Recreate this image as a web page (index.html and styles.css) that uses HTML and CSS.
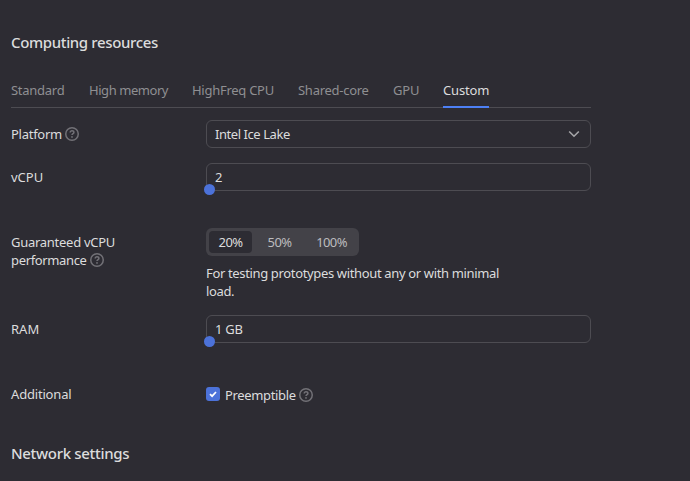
FILE: index.html
```html
<!DOCTYPE html>
<html lang="en">
<head>
<meta charset="utf-8">
<title>Computing resources</title>
<link rel="stylesheet" href="styles.css">
</head>
<body>
<svg width="0" height="0" class="defs">
  <symbol id="help" viewBox="0 0 14 14">
    <circle cx="7" cy="7" r="6.25" fill="none" stroke="currentColor" stroke-width="1.5"/>
    <path d="M5.2 5.6C5.2 4.4 6 3.8 7 3.8s1.9.6 1.9 1.6C8.900 6.600 7 6.700 7 8.100" fill="none" stroke="currentColor" stroke-width="1.5"/>
    <circle cx="7" cy="9.900" r=".9" fill="currentColor"/>
  </symbol>
</svg>
<main class="page">
  <h2 class="title">Computing resources</h2>
  <nav class="tabs">
    <span class="tab">Standard</span>
    <span class="tab tighter">High memory</span>
    <span class="tab">HighFreq CPU</span>
    <span class="tab">Shared-core</span>
    <span class="tab loose">GPU</span>
    <span class="tab loose active">Custom</span>
  </nav>
  <div class="row row-platform">
    <div class="label">Platform <svg class="help"><use href="#help"/></svg></div>
    <div class="field select"><span class="tighter">Intel Ice Lake</span>
      <svg class="chevron" viewBox="0 0 12 8"><path d="M1.200 1.500 6 6.200 10.800 1.500" fill="none" stroke="currentColor" stroke-width="1.600"/></svg>
    </div>
  </div>
  <div class="row row-cpu">
    <div class="label natural">vCPU</div>
    <div class="field">2<i class="knob"></i></div>
  </div>
  <div class="row row-perf">
    <div class="label multi">Guaranteed vCPU<br><span class="tight">performance</span><svg class="help"><use href="#help"/></svg></div>
    <div>
      <div class="segments">
        <span class="segment on">20%</span><span class="segment">50%</span><span class="segment">100%</span>
      </div>
      <p class="hint tight">For testing prototypes without any or with minimal<br>load.</p>
    </div>
  </div>
  <div class="row row-ram">
    <div class="label natural">RAM</div>
    <div class="field">1 GB<i class="knob"></i></div>
  </div>
  <div class="row row-extra">
    <div class="label loose">Additional</div>
    <div class="check">
      <span class="box"><svg viewBox="0 0 14 14"><path d="M4 7.200 6.100 9.200 10 5" fill="none" stroke="#fff" stroke-width="1.700"/></svg></span>
      <span class="t-pre tight">Preemptible</span> <svg class="help"><use href="#help"/></svg>
    </div>
  </div>
  <h2 class="title network">Network settings</h2>
</main>
</body>
</html>
```
FILE: styles.css
```css
* { box-sizing: border-box; }
body {
  margin: 0;
  height: 481px;
  overflow: hidden;
  background: #2d2c33;
  color: #dcdcdd;
  font: 13px/18px "Noto Sans", sans-serif;
  letter-spacing: -0.27px;
  white-space: nowrap;
}
.defs { position: absolute; }
.page { width: 580px; margin-left: 11px; padding-top: 32px; }
.title { margin: 0; font-size: 15px; line-height: 20px; font-weight: 500; letter-spacing: -0.37px; }
.tabs {
  display: grid;
  grid-template-columns: 54px 79px 82px 71px 26px 46px;
  column-gap: 24px;
  height: 36px;
  margin-top: 20px;
  border-bottom: 1px solid #4d4c52;
}
.tab { height: 36px; padding-top: 9px; color: #8f8f92; }
.tab.active { color: #dcdcdd; border-bottom: 2px solid #4d80f5; }
.tight { letter-spacing: -0.35px; }
.tighter { letter-spacing: -0.44px; }
.loose { letter-spacing: -0.18px; }
.natural { letter-spacing: 0; }
.row { display: grid; grid-template-columns: 195px 385px; align-items: start; }
.row-platform { margin-top: 12px; }
.row-cpu { margin-top: 15px; }
.row-perf { margin-top: 37px; }
.row-ram { margin-top: 15px; }
.row-extra { margin-top: 37px; }
.label { display: flex; align-items: center; gap: 3px; height: 28px; }
.label.multi { display: block; height: auto; padding-top: 5px; }
.help { width: 14px; height: 14px; color: #727177; flex: none; }
.multi .help { margin-left: 3px; vertical-align: -2px; }
.field {
  position: relative;
  display: flex;
  align-items: center;
  height: 28px;
  padding: 0 8px;
  border: 1px solid #4d4c52;
  border-radius: 6px;
}
.select { justify-content: space-between; }
.chevron { width: 12px; height: 8px; margin-right: 2px; color: #a6a6a9; }
.knob {
  position: absolute;
  left: -3px;
  bottom: -5px;
  width: 11px;
  height: 11px;
  border-radius: 50%;
  background: #4c72d9;
}
.segments { display: inline-flex; height: 28px; padding: 3px; border-radius: 6px; background: #434248; vertical-align: top; letter-spacing: -0.6px; }
.segment { padding: 2px 0; width: 53px; text-align: center; color: #bcbcbf; }
.segment.on { width: 43px; border-radius: 4px; background: #2d2c33; color: #dcdcdd; }
.segment:nth-child(2) { width: 55px; }
.segment:nth-child(3) { width: 49px; }
.hint { margin: 8px 0 0; }
.check { display: flex; align-items: center; height: 28px; padding-top: 1px; }
.box { width: 14px; height: 14px; margin: -2px 5px 0 0; border-radius: 3px; background: #4c72d9; }
.box svg { display: block; }
.t-pre { margin-right: 3px; }
.network { margin-top: 35px; letter-spacing: -0.32px; }
```
